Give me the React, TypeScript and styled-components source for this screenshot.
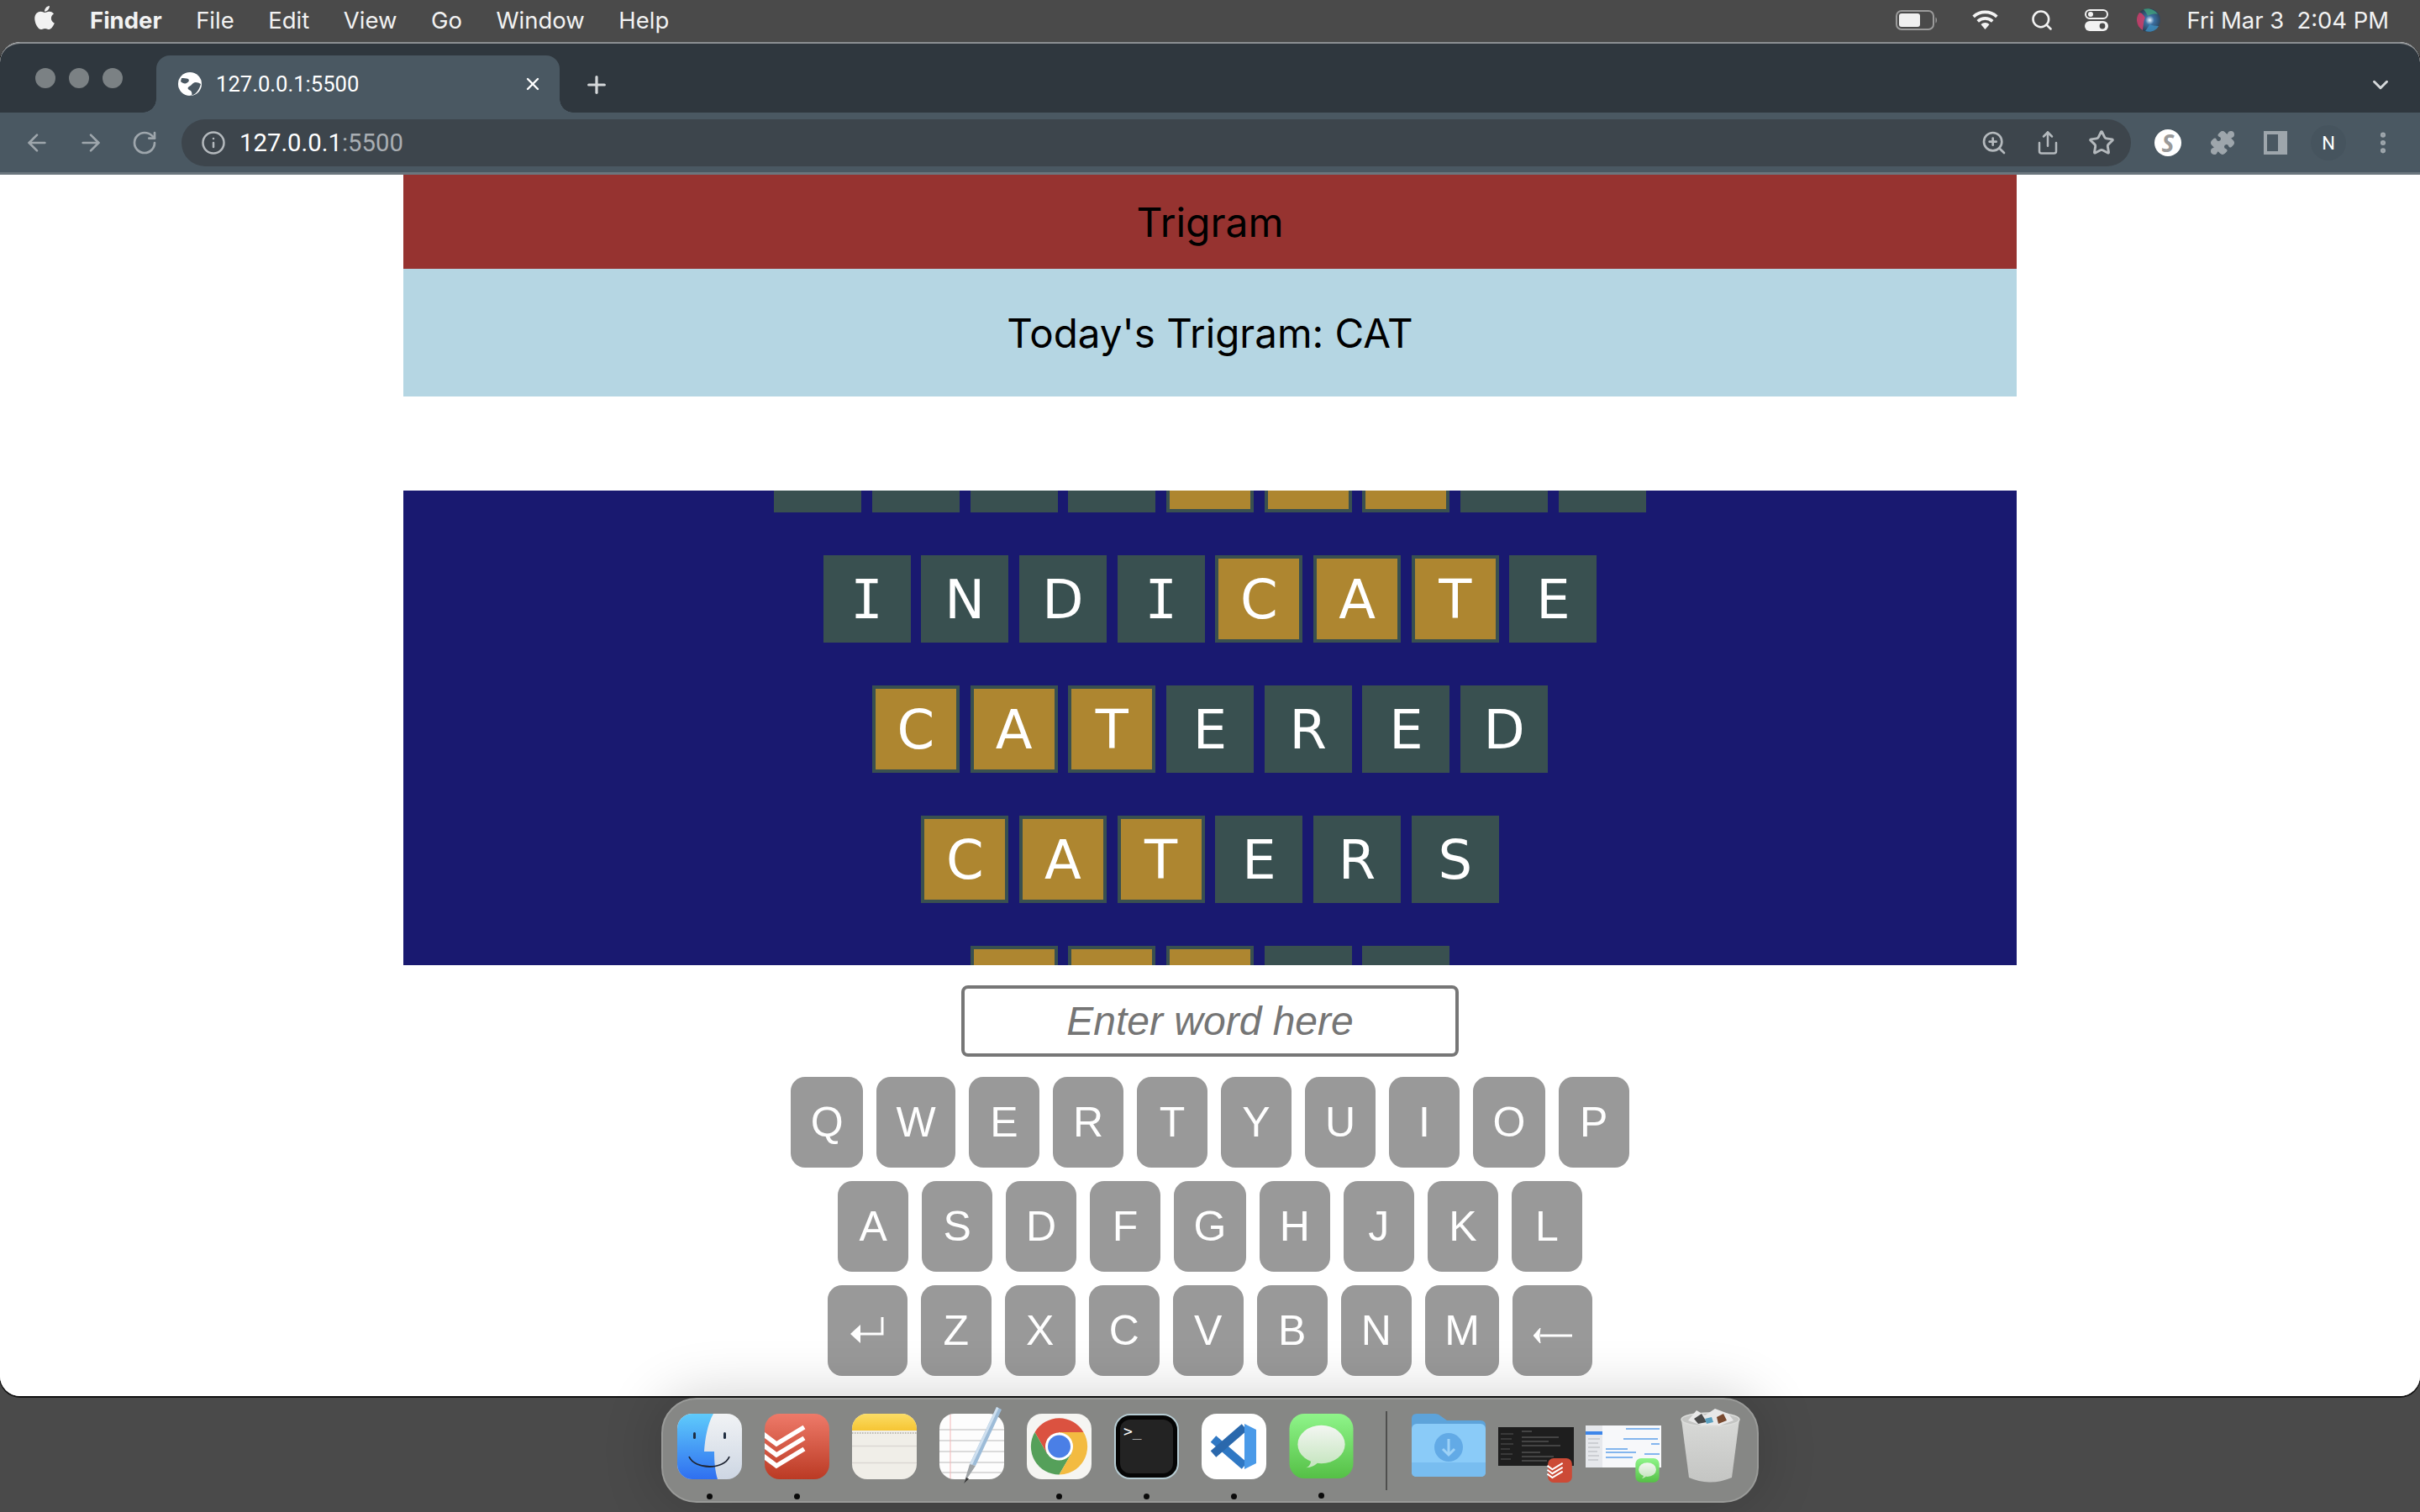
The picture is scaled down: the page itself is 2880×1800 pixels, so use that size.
import React from "react";
import styled, { createGlobalStyle } from "styled-components";
import {
  ArrowLeft,
  ArrowRight,
  RotateCw,
  Info,
  ZoomIn,
  Share,
  Star,
  Puzzle,
  EllipsisVertical,
  ChevronDown,
  X,
  Plus,
  Search,
} from "lucide-react";
import { FaApple } from "react-icons/fa";

const GlobalStyle = createGlobalStyle`
  html, body {
    margin: 0;
    padding: 0;
    background: #4a4a4a;
  }
  * { box-sizing: border-box; }
`;

const Desktop = styled.div`
  width: 2880px;
  height: 1800px;
  background: #4a4a4a;
  display: flex;
  flex-direction: column;
  overflow: hidden;
  font-family: Inter, "Liberation Sans", sans-serif;
`;

/* ---- mac menu bar ---- */
const MenuBar = styled.div`
  height: 50px;
  flex: none;
  display: flex;
  align-items: center;
  padding: 0 37px 2px 38px;
  color: #f2f2f2;
`;
const AppleMark = styled.div`
  width: 30px;
  display: flex;
  margin-right: 39px;
  margin-top: -6px;
`;
const MenuItem = styled.span<{ $bold?: boolean }>`
  font-size: 27.5px;
  font-weight: ${(p) => (p.$bold ? 700 : 400)};
  margin-right: 40.5px;
`;
const StatusArea = styled.div`
  margin-left: auto;
  display: flex;
  align-items: center;
`;
const StatusIcon = styled.div<{ $gap: number }>`
  display: flex;
  margin-right: ${(p) => p.$gap}px;
`;
const Clock = styled.span`
  font-size: 27.4px;
  white-space: pre;
`;

/* ---- browser ---- */
const BrowserWindow = styled.div`
  height: 1612px;
  flex: none;
  display: flex;
  flex-direction: column;
  border-radius: 24px;
  overflow: hidden;
  background: #fff;
  box-shadow: 0 1px 0 1px #111;
`;
const TabStrip = styled.div`
  height: 84px;
  flex: none;
  background: #2f373e;
  border-top: 2px solid #8c9093;
  border-radius: 24px 24px 0 0;
  display: flex;
  align-items: flex-end;
  padding-left: 42px;
  padding-right: 32px;
`;
const TrafficLights = styled.div`
  display: flex;
  gap: 16px;
  align-self: flex-start;
  margin-top: 29px;
`;
const Light = styled.span`
  width: 24px;
  height: 24px;
  border-radius: 50%;
  background: #7b8184;
`;
const Tab = styled.div`
  position: relative;
  width: 480px;
  height: 68px;
  margin-left: 40px;
  background: #4a5862;
  border-radius: 16px 16px 0 0;
  display: flex;
  align-items: center;
  padding-left: 26px;
  color: #fff;

  &::before,
  &::after {
    content: "";
    position: absolute;
    bottom: 0;
    width: 16px;
    height: 16px;
  }
  &::before {
    left: -16px;
    background: radial-gradient(circle at 0 0, transparent 15.5px, #4a5862 16px);
  }
  &::after {
    right: -16px;
    background: radial-gradient(circle at 100% 0, transparent 15.5px, #4a5862 16px);
  }
`;
const TabTitle = styled.span`
  font-family: Roboto, sans-serif;
  font-size: 25.6px;
  margin-left: 17px;
  flex: 1;
`;
const TabClose = styled.div`
  display: flex;
  margin-right: 20px;
`;
const NewTab = styled.div`
  display: flex;
  align-self: center;
  margin: 16px 0 0 28px;
  color: #d5d8da;
`;
const TabMenu = styled.div`
  display: flex;
  align-self: center;
  margin: 16px 0 0 auto;
  color: #d5d8da;
`;

const Toolbar = styled.div`
  height: 74px;
  flex: none;
  background: #4a5862;
  border-bottom: 3px solid #6b767e;
  display: flex;
  align-items: center;
  padding: 1px 0 0 28px;
  color: #9ea6ac;
`;
const NavIcons = styled.div`
  display: flex;
  gap: 32px;
`;
const AddressBar = styled.div`
  width: 2320px;
  height: 56px;
  margin-left: 28px;
  background: #3d454c;
  border-radius: 28px;
  display: flex;
  align-items: center;
  padding: 0 19px 0 23px;
  color: #b4b9bd;
`;
const Url = styled.span`
  font-family: Roboto, sans-serif;
  font-size: 29.3px;
  margin-left: 16px;
  color: #fff;
`;
const UrlPort = styled.span`
  color: #a9aeb3;
`;
const AddressActions = styled.div`
  margin-left: auto;
  display: flex;
  align-items: center;
  gap: 33px;
`;
const Extensions = styled.div`
  display: flex;
  align-items: center;
  margin-left: 28px;
`;
const SBadge = styled.div`
  width: 32px;
  height: 32px;
  border-radius: 50%;
  background: #fff;
  color: #9a9a9a;
  font: italic 700 28px "Open Sans", sans-serif;
  display: flex;
  align-items: center;
  justify-content: center;
`;
const ExtSlot = styled.div<{ $left: number }>`
  display: flex;
  margin-left: ${(p) => p.$left}px;
`;
const Avatar = styled.div`
  width: 42px;
  height: 42px;
  margin-left: 28px;
  border-radius: 50%;
  background: #46545e;
  color: #fff;
  font: 22px Roboto, sans-serif;
  display: flex;
  align-items: center;
  justify-content: center;
`;

/* ---- the game page ---- */
const Page = styled.main`
  flex: 1;
  display: flex;
  flex-direction: column;
  align-items: center;
  background: #fff;
`;
const Game = styled.div`
  width: 1920px;
  display: flex;
  flex-direction: column;
  align-items: center;
`;
const Title = styled.header`
  width: 100%;
  height: 112px;
  background: #963330;
  color: #000;
  font-size: 48px;
  display: flex;
  align-items: center;
  justify-content: center;
`;
const Today = styled.div`
  width: 100%;
  height: 152px;
  background: #b5d6e3;
  color: #000;
  font-size: 47.5px;
  display: flex;
  align-items: center;
  justify-content: center;
`;
const Board = styled.section`
  width: 100%;
  height: 565px;
  margin-top: 112px;
  background: #191970;
  overflow: hidden;
`;
const WordList = styled.div`
  margin-top: -78px;
  display: flex;
  flex-direction: column;
  gap: 51px;
`;
const WordRow = styled.div`
  display: flex;
  justify-content: center;
  gap: 12.7px;
`;
const Tile = styled.div<{ $hit: boolean }>`
  width: 104px;
  height: 104px;
  padding-top: 2px;
  border: 4px solid #395050;
  background: ${(p) => (p.$hit ? "#ae8630" : "#395050")};
  color: #fff;
  font-family: "DejaVu Sans", sans-serif;
  font-size: 64px;
  display: flex;
  align-items: center;
  justify-content: center;
`;
const SerifI = styled.span`
  font-family: "DejaVu Sans Mono", monospace;
`;
const WordInput = styled.input`
  width: 592px;
  height: 85px;
  margin-top: 24px;
  border: 4px solid #767676;
  border-radius: 8px;
  background: #fff;
  text-align: center;
  font: 48px "Liberation Sans", Arial, sans-serif;
  outline: none;

  &::placeholder {
    font-style: italic;
    color: #757575;
    opacity: 1;
  }
`;
const Keyboard = styled.div`
  margin-top: 24px;
  display: flex;
  flex-direction: column;
  gap: 16px;
`;
const KeyRow = styled.div`
  display: flex;
  justify-content: center;
  gap: 16px;
`;
const Key = styled.button<{ $wide?: boolean }>`
  min-width: ${(p) => (p.$wide ? 95 : 84)}px;
  height: 108px;
  padding: 0 ${(p) => (p.$wide ? 0 : 23.4)}px;
  border: 0;
  border-radius: 17px;
  background: #999;
  color: #fff;
  font: 50px "Liberation Sans", Arial, sans-serif;
  display: flex;
  align-items: center;
  justify-content: center;
`;

/* ---- dock ---- */
const Dock = styled.nav`
  position: relative;
  z-index: 2;
  width: 1306px;
  height: 125px;
  margin: 2px auto 0;
  padding: 17px 0 0 17px;
  display: flex;
  align-items: flex-start;
  background: #868785;
  border: 2px solid #9a9b99;
  border-radius: 42px;
  box-shadow: 0 0 70px rgba(0, 0, 0, 0.2);
`;
const DockItem = styled.div<{ $w?: number; $ml?: number }>`
  width: ${(p) => p.$w ?? 77}px;
  margin-left: ${(p) => p.$ml ?? 0}px;
  flex: none;
  display: flex;
  flex-direction: column;
  align-items: center;

  svg {
    display: block;
    overflow: visible;
  }
`;
const RunDot = styled.span`
  width: 7px;
  height: 7px;
  margin-top: 17px;
  border-radius: 50%;
  background: #0a0a0a;
`;
const DockDivider = styled.div`
  width: 2px;
  height: 94px;
  margin: -3px 0 0 38px;
  background: #4f4f4e;
`;

const row1 = ["Q", "W", "E", "R", "T", "Y", "U", "I", "O", "P"];
const row2 = ["A", "S", "D", "F", "G", "H", "J", "K", "L"];
const row3 = ["Z", "X", "C", "V", "B", "N", "M"];

// the list is scrolled, so first and last words are only half in view
const guesses = ["ADVOCATES", "INDICATE", "CATERED", "CATERS", "CATER"];

function Word({ word }: { word: string }) {
  const at = word.indexOf("CAT");
  return (
    <WordRow>
      {word.split("").map((ch, i) => (
        <Tile key={i} $hit={i >= at && i < at + 3}>
          {ch === "I" ? <SerifI>I</SerifI> : ch}
        </Tile>
      ))}
    </WordRow>
  );
}

const EnterArrow = () => (
  <svg width="40" height="32" viewBox="0 0 40 32">
    <path d="M38 0V20H10" fill="none" stroke="#fff" strokeWidth="3" />
    <path d="M0 20L12 9V31z" fill="#fff" />
  </svg>
);

const BackArrow = () => (
  <svg width="46" height="20" viewBox="0 0 46 20" style={{ marginTop: 11 }}>
    <path d="M8 10H46" fill="none" stroke="#fff" strokeWidth="3" />
    <path d="M0 10L8 1L7 8V12L8 19z" fill="#fff" stroke="#fff" strokeWidth="1" />
  </svg>
);

const Battery = () => (
  <svg width="50" height="24" viewBox="0 0 50 24">
    <rect x="1" y="1" width="44" height="22" rx="6" fill="none" stroke="#9b9b9b" strokeWidth="2" />
    <rect x="4" y="4" width="25" height="16" rx="3" fill="#f0f0f0" />
    <path d="M47.5 8.5c2 1 2 6 0 7z" fill="#9b9b9b" />
  </svg>
);

const Wifi = () => (
  <svg width="33" height="24" viewBox="0 0 35 26">
    <path d="M17.5 25l-5.5-6.5a8 8 0 0 1 11 0z" fill="#f2f2f2" />
    <path d="M8 14.5a14 14 0 0 1 19 0" fill="none" stroke="#f2f2f2" strokeWidth="4" />
    <path d="M2.5 8.5a22 22 0 0 1 30 0" fill="none" stroke="#f2f2f2" strokeWidth="4" />
  </svg>
);

const ControlCenter = () => (
  <svg width="28" height="26" viewBox="0 0 28 26">
    <rect x="1" y="1" width="26" height="10" rx="5" fill="none" stroke="#f2f2f2" strokeWidth="2" />
    <circle cx="7" cy="6" r="3" fill="#f2f2f2" />
    <rect x="0" y="14" width="28" height="12" rx="6" fill="#f2f2f2" />
    <circle cx="21" cy="20" r="3.4" fill="#4a4a4a" />
  </svg>
);

const Siri = () => (
  <svg width="28" height="28" viewBox="0 0 28 28">
    <defs>
      <radialGradient id="siriCore" cx="0.55" cy="0.5" r="0.55">
        <stop offset="0" stopColor="#e8f4ff" />
        <stop offset="0.35" stopColor="#3a6ea0" />
        <stop offset="1" stopColor="#2a3a4a" />
      </radialGradient>
    </defs>
    <circle cx="14" cy="14" r="14" fill="url(#siriCore)" />
    <path d="M3 5C-2 11 -1 21 7 26c1-6 1-12 3-15-2-3-4-6-7-6z" fill="#d03f6a" opacity="0.85" />
    <path d="M8 1c6-2 13 0 17 6-5-1-9 0-12 2-1-3-3-5-5-8z" fill="#3f9e7e" opacity="0.85" />
    <path d="M10 27c6 2 13 0 16-6-4 0-8-1-11-2-1 3-3 5-5 8z" fill="#3f8fc0" opacity="0.8" />
  </svg>
);

const GlobeIcon = () => (
  <svg width="28" height="28" viewBox="0 0 28 28">
    <circle cx="14" cy="14" r="14" fill="#fff" />
    <path d="M4 7c3 0 6 0 8 1 2 2 0 4-2 5s-5 0-7-2zM27 14c-3-2-7-3-9-1-2 1-2 3-5 4-2 1-2 3 0 4 3 1 4 4 3 7l-3 0c5 0 11-3 14-14z" fill="#4a5862" />
  </svg>
);

const SidePanel = () => (
  <svg width="28" height="28" viewBox="0 0 28 28">
    <rect width="28" height="28" fill="#9ea6ac" />
    <rect x="4" y="4" width="13" height="20" fill="#4a5862" />
  </svg>
);

const Squircle = ({ id, children }: { id: string; children: React.ReactNode }) => (
  <>
    <clipPath id={id}>
      <rect width="77" height="78" rx="18" />
    </clipPath>
    <g clipPath={`url(#${id})`}>{children}</g>
  </>
);

const FinderIcon = () => (
  <svg width="77" height="78" viewBox="0 0 77 78">
    <defs>
      <linearGradient id="finderBlue" x1="0" y1="0" x2="0" y2="1">
        <stop offset="0" stopColor="#5fcbfb" />
        <stop offset="1" stopColor="#2f6ff0" />
      </linearGradient>
      <linearGradient id="finderGrey" x1="0" y1="0" x2="0" y2="1">
        <stop offset="0" stopColor="#f1f3f5" />
        <stop offset="1" stopColor="#cdd6e3" />
      </linearGradient>
    </defs>
    <Squircle id="finderClip">
      <rect width="77" height="78" fill="url(#finderGrey)" />
      <path d="M0 0H43C36 12 33 30 32 45H44C44 58 45 68 48 78H0z" fill="url(#finderBlue)" />
    </Squircle>
    <rect x="19" y="22" width="3" height="8" rx="1.5" fill="#1f2d40" />
    <rect x="55" y="22" width="3" height="8" rx="1.5" fill="#1f2d40" />
    <path d="M14 51c7 16 42 16 48 0" fill="none" stroke="#1f2533" strokeWidth="1.8" />
  </svg>
);

const Chevrons = () => (
  <g fill="none" stroke="#fff" strokeWidth="5.5">
    <path d="M-2 24l16 12 33-20" />
    <path d="M-2 37l16 12 33-20" />
    <path d="M-2 50l16 12 33-20" />
  </g>
);

const TodoistIcon = () => (
  <svg width="77" height="78" viewBox="0 0 77 78">
    <defs>
      <linearGradient id="todoRed" x1="0" y1="0" x2="0" y2="1">
        <stop offset="0" stopColor="#ee7a69" />
        <stop offset="1" stopColor="#bb3a24" />
      </linearGradient>
    </defs>
    <Squircle id="todoClip">
      <rect width="77" height="78" fill="url(#todoRed)" />
      <Chevrons />
    </Squircle>
  </svg>
);

const NotesIcon = () => (
  <svg width="77" height="78" viewBox="0 0 77 78">
    <defs>
      <linearGradient id="notesTop" x1="0" y1="0" x2="0" y2="1">
        <stop offset="0" stopColor="#fbdd66" />
        <stop offset="1" stopColor="#f6c533" />
      </linearGradient>
    </defs>
    <Squircle id="notesClip">
      <rect width="77" height="78" fill="#f0eee8" />
      <rect width="77" height="20" fill="url(#notesTop)" />
      <path d="M0 23H77" stroke="#bdbbb5" strokeWidth="2" strokeDasharray="1.5 1.5" />
      <path d="M0 38.500H77M0 58.500H77" stroke="#dad8d3" strokeWidth="1.500" />
    </Squircle>
  </svg>
);

const TextEditIcon = () => (
  <svg width="77" height="78" viewBox="0 0 77 78">
    <Squircle id="editClip">
      <rect width="77" height="78" fill="#fdfdfd" />
      <path d="M0 19H77M0 32H77M0 45H77M0 58H77M0 70H77" stroke="#cfcfcf" strokeWidth="1.500" />
      <path d="M13 0V78" stroke="#f3b7b7" strokeWidth="1" />
    </Squircle>
    <path d="M68 -8L74 -5L43 62L36 60z" fill="#9dbcd8" />
    <path d="M68 -8L70.500 -6.800L39 61L36 60z" fill="#cfe0ef" />
    <path d="M36 60L43 62L29 83z" fill="#9ea3a6" />
    <path d="M32 76L35 77.500L29 83z" fill="#333" />
  </svg>
);

const ChromeIcon = () => (
  <svg width="77" height="78" viewBox="0 0 77 78">
    <rect width="77" height="78" rx="18" fill="#f5f5f2" />
    <path d="M67.500 22A33.500 33.500 0 0 0 9.500 22L24 47.500L38.500 22z" fill="#db5240" />
    <path d="M9.500 22A33.500 33.500 0 0 0 38.500 72.500L53 47.500L24 47.500z" fill="#55a05a" />
    <path d="M38.500 72.500A33.500 33.500 0 0 0 67.500 22L38.500 22L53 47.500z" fill="#f3bb41" />
    <circle cx="38.500" cy="39" r="16.500" fill="#fff" />
    <circle cx="38.500" cy="39" r="13.500" fill="#4a7fe6" />
  </svg>
);

const TerminalIcon = () => (
  <svg width="77" height="78" viewBox="0 0 77 78">
    <rect x="1" y="1" width="75" height="76" rx="18" fill="#050505" stroke="#b6ccd3" strokeWidth="2" />
    <rect x="7" y="7" width="63" height="64" rx="12" fill="#232323" />
    <text x="11" y="27" fill="#fff" fontFamily="DejaVu Sans Mono, monospace" fontSize="18">
      {">_"}
    </text>
  </svg>
);

const VsCodeIcon = () => (
  <svg width="77" height="78" viewBox="0 0 77 78">
    <rect width="77" height="78" rx="18" fill="#fff" />
    <path d="M14 30L51 62" stroke="#2f78c4" strokeWidth="10" />
    <path d="M51 16L14 48" stroke="#2a68ac" strokeWidth="10" />
    <path d="M51 12L65 19V59L51 66z" fill="#4a9ae8" />
  </svg>
);

const BubbleIcon = ({ size = 77, id }: { size?: number; id: string }) => (
  <svg width={size} height={size} viewBox="0 0 77 78">
    <defs>
      <linearGradient id={id + "Bg"} x1="0" y1="0" x2="0" y2="1">
        <stop offset="0" stopColor="#8ff58a" />
        <stop offset="1" stopColor="#55c046" />
      </linearGradient>
      <linearGradient id={id + "Fg"} x1="0" y1="0" x2="0" y2="1">
        <stop offset="0" stopColor="#f3f6f2" />
        <stop offset="1" stopColor="#c8e6c2" />
      </linearGradient>
    </defs>
    <rect width="77" height="78" rx="18" fill={`url(#${id}Bg)`} />
    <ellipse cx="38.500" cy="37" rx="28.500" ry="23" fill={`url(#${id}Fg)`} />
    <path d="M26 56C26 60 24 64 20 65C26 65 32 62 35 58z" fill="#c8e6c2" />
  </svg>
);

const FolderIcon = () => (
  <svg width="88" height="78" viewBox="0 0 88 78">
    <path d="M0 6Q0 0 6 0H28Q32 0 35 3L42 8H82Q88 8 88 14V40H0z" fill="#5da3da" />
    <rect y="12" width="88" height="63" rx="6" fill="#8acbf8" />
    <path d="M0 58H88V70Q88 75 82 75H6Q0 75 0 70z" fill="#78bdf0" />
    <circle cx="44" cy="40" r="17" fill="#62aae6" />
    <path d="M44 30V49M37 42L44 49L51 42" fill="none" stroke="#9dd2f7" strokeWidth="3" />
  </svg>
);

const DarkThumb = () => (
  <svg width="90" height="78" viewBox="0 0 90 78">
    <rect y="16" width="90" height="46" fill="#1e1e1e" />
    <path d="M3 24H18M3 30H16M3 36H18M3 42H14M3 48H17M3 54H15" stroke="#555" strokeWidth="1" />
    <path d="M28 21H40M28 28H72M28 33H60M28 38H74M28 46H50M28 51H66M28 56H58" stroke="#6a6a6a" strokeWidth="1" />
    <svg x="59" y="53" width="29" height="29" viewBox="0 0 77 78">
      <rect width="77" height="78" rx="18" fill="#cc4a36" />
      <Chevrons />
    </svg>
  </svg>
);

const LightThumb = () => (
  <svg width="90" height="78" viewBox="0 0 90 78">
    <rect y="14" width="90" height="50" fill="#f7f8fa" />
    <rect width="20" height="50" y="14" fill="#e6e8ec" />
    <rect y="21" width="20" height="4" fill="#3d86ea" />
    <path d="M3 30H17M3 35H15M3 40H17M3 45H14M3 50H16M3 55H15" stroke="#b2b5ba" strokeWidth="1" />
    <path d="M48 18H88M45 30H86M78 36H88M24 42H50M24 46H60M70 48H88M24 52H56" stroke="#84b6ee" strokeWidth="2" />
    <svg x="59" y="53" width="29" height="29" viewBox="0 0 77 78">
      <BubbleIcon id="miniBubble" />
    </svg>
  </svg>
);

const TrashIcon = () => (
  <svg width="69" height="78" viewBox="0 0 69 78">
    <defs>
      <linearGradient id="trashCup" x1="0" y1="0" x2="0" y2="1">
        <stop offset="0" stopColor="#d8d9d7" />
        <stop offset="1" stopColor="#c4c5c3" />
      </linearGradient>
    </defs>
    <path d="M0 7L69 7L60 76Q34 87 9 76z" fill="url(#trashCup)" />
    <ellipse cx="34.500" cy="7" rx="34.500" ry="8" fill="#c4c5c3" stroke="#dcdddb" strokeWidth="1.500" />
    <path d="M8 8L18 -4L28 2L40 -6L56 0L62 8L46 14L24 14z" fill="#e8e8e8" />
    <path d="M15 6L24 0L30 10L20 12z" fill="#4a4a4a" />
    <path d="M42 4L50 0L54 8L44 12z" fill="#7a4a30" />
    <path d="M28 6L36 4L38 10L30 12z" fill="#5aa0c0" />
  </svg>
);

export default function App() {
  return (
    <Desktop>
      <GlobalStyle />
      <MenuBar>
        <AppleMark>
          <FaApple size={32} color="#f2f2f2" />
        </AppleMark>
        <MenuItem $bold>Finder</MenuItem>
        <MenuItem>File</MenuItem>
        <MenuItem>Edit</MenuItem>
        <MenuItem>View</MenuItem>
        <MenuItem>Go</MenuItem>
        <MenuItem>Window</MenuItem>
        <MenuItem>Help</MenuItem>
        <StatusArea>
          <StatusIcon $gap={40}><Battery /></StatusIcon>
          <StatusIcon $gap={37}><Wifi /></StatusIcon>
          <StatusIcon $gap={37}><Search size={28} strokeWidth={2.2} /></StatusIcon>
          <StatusIcon $gap={34}><ControlCenter /></StatusIcon>
          <StatusIcon $gap={32}><Siri /></StatusIcon>
          <Clock>Fri Mar 3  2:04 PM</Clock>
        </StatusArea>
      </MenuBar>

      <BrowserWindow>
        <TabStrip>
          <TrafficLights>
            <Light />
            <Light />
            <Light />
          </TrafficLights>
          <Tab>
            <GlobeIcon />
            <TabTitle>127.0.0.1:5500</TabTitle>
            <TabClose><X size={24} strokeWidth={2.4} /></TabClose>
          </Tab>
          <NewTab><Plus size={32} strokeWidth={2.4} /></NewTab>
          <TabMenu><ChevronDown size={30} strokeWidth={2.4} /></TabMenu>
        </TabStrip>

        <Toolbar>
          <NavIcons>
            <ArrowLeft size={32} strokeWidth={2} />
            <ArrowRight size={32} strokeWidth={2} />
            <RotateCw size={32} strokeWidth={2} />
          </NavIcons>
          <AddressBar>
            <Info size={30} strokeWidth={2} />
            <Url>
              127.0.0.1<UrlPort>:5500</UrlPort>
            </Url>
            <AddressActions>
              <ZoomIn size={32} strokeWidth={2} />
              <Share size={30} strokeWidth={2} />
              <Star size={32} strokeWidth={2.2} />
            </AddressActions>
          </AddressBar>
          <Extensions>
            <SBadge>S</SBadge>
            <ExtSlot $left={33}><Puzzle size={32} fill="#9ea6ac" strokeWidth={1} /></ExtSlot>
            <ExtSlot $left={33}><SidePanel /></ExtSlot>
            <Avatar>N</Avatar>
            <ExtSlot $left={28}><EllipsisVertical size={32} strokeWidth={2.6} /></ExtSlot>
          </Extensions>
        </Toolbar>

        <Page>
          <Game>
            <Title>Trigram</Title>
            <Today>Today's Trigram: CAT</Today>
            <Board>
              <WordList>
                {guesses.map((g) => (
                  <Word key={g} word={g} />
                ))}
              </WordList>
            </Board>
            <WordInput placeholder="Enter word here" />
            <Keyboard>
              <KeyRow>{row1.map((k) => <Key key={k}>{k}</Key>)}</KeyRow>
              <KeyRow>{row2.map((k) => <Key key={k}>{k}</Key>)}</KeyRow>
              <KeyRow>
                <Key $wide aria-label="Enter"><EnterArrow /></Key>
                {row3.map((k) => <Key key={k}>{k}</Key>)}
                <Key $wide aria-label="Backspace"><BackArrow /></Key>
              </KeyRow>
            </Keyboard>
          </Game>
        </Page>
      </BrowserWindow>

      <Dock>
        <DockItem><FinderIcon /><RunDot /></DockItem>
        <DockItem $ml={27}><TodoistIcon /><RunDot /></DockItem>
        <DockItem $ml={27}><NotesIcon /></DockItem>
        <DockItem $ml={27}><TextEditIcon /></DockItem>
        <DockItem $ml={27}><ChromeIcon /><RunDot /></DockItem>
        <DockItem $ml={27}><TerminalIcon /><RunDot /></DockItem>
        <DockItem $ml={27}><VsCodeIcon /><RunDot /></DockItem>
        <DockItem $ml={27}><BubbleIcon id="bubble" /><RunDot /></DockItem>
        <DockDivider />
        <DockItem $w={88} $ml={29}><FolderIcon /></DockItem>
        <DockItem $w={90} $ml={15}><DarkThumb /></DockItem>
        <DockItem $w={90} $ml={14}><LightThumb /></DockItem>
        <DockItem $w={69} $ml={24}><TrashIcon /></DockItem>
      </Dock>
    </Desktop>
  );
}
